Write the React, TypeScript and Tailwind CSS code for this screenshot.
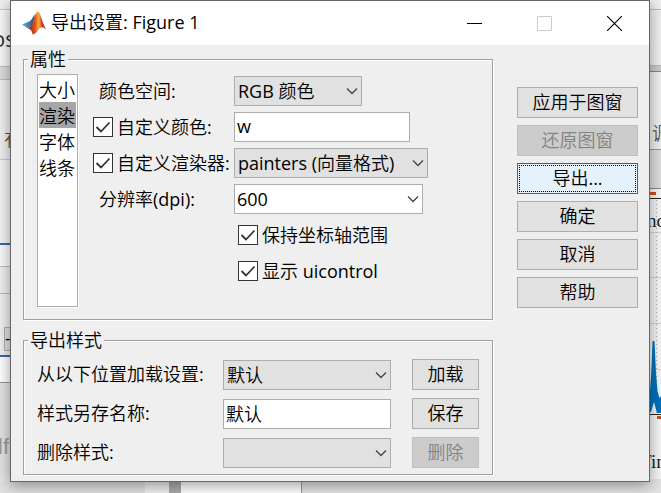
import { useState } from "react";
import type { ReactNode } from "react";

const selectBase =
  "h-[30px] w-full appearance-none border border-[#adadad] pr-6 text-black outline-none";

function Chevron() {
  return (
    <svg
      className="pointer-events-none absolute right-1 top-1/2 -translate-y-1/2"
      width="12"
      height="8"
      viewBox="0 0 12 8"
      fill="none"
      aria-hidden="true"
    >
      <path d="M1 1.5L6 6.5L11 1.5" stroke="#444" strokeWidth="1.3" />
    </svg>
  );
}

function Dropdown({ id, options, width, white = false }: { id: string; options: string[]; width: string; white?: boolean }) {
  return (
    <div className={`relative ${width}`}>
      <select id={id} className={`${selectBase} ${white ? "bg-white pl-0.5" : "bg-[#e1e1e1] pl-[3px]"}`}>
        {options.map((option) => (
          <option key={option}>{option}</option>
        ))}
      </select>
      <Chevron />
    </div>
  );
}

function Checkbox({ children }: { children: ReactNode }) {
  const [checked, setChecked] = useState(true);

  return (
    <label className="flex items-center gap-1 whitespace-nowrap">
      <span className="relative flex h-5 w-5 shrink-0">
        <input
          type="checkbox"
          checked={checked}
          onChange={(e) => setChecked(e.target.checked)}
          className="h-5 w-5 appearance-none border border-[#333] bg-white"
        />
        {checked && (
          <svg className="pointer-events-none absolute inset-0" width="20" height="20" viewBox="0 0 20 20" fill="none" aria-hidden="true">
            <path d="M3.5 10L8 14.5L16.5 5.5" stroke="#333" strokeWidth="1.8" />
          </svg>
        )}
      </span>
      {children}
    </label>
  );
}

function PushButton({ children, disabled = false, primary = false }: { children: ReactNode; disabled?: boolean; primary?: boolean }) {
  const look = disabled
    ? "border-[#bfbfbf] bg-[#cccccc] text-[#838383]"
    : primary
      ? "border-[#0078d7] bg-[#e5f1fb] outline-1 -outline-offset-3 outline-dotted outline-black"
      : "border-[#adadad] bg-[#e1e1e1]";

  return (
    <button type="button" disabled={disabled} className={`h-[31px] w-full border pb-0.5 leading-6 ${look}`}>
      {children}
    </button>
  );
}

function Group({ title, children }: { title: string; children: ReactNode }) {
  return (
    <fieldset className="min-w-0 border border-[#a0a0a0] px-[13px] shadow-[1px_1px_0_#fff,inset_1px_1px_0_#fff]">
      <legend className="-ml-[9px] bg-[#efefef] px-0.5 leading-5">{title}</legend>
      {children}
    </fieldset>
  );
}

function MatlabLogo() {
  return (
    <svg width="24" height="24" viewBox="0 0 24 24" aria-hidden="true">
      <defs>
        <linearGradient id="wing" x1="0" y1="0" x2="1" y2="0">
          <stop offset="0" stopColor="#5bb4e5" />
          <stop offset="1" stopColor="#234a7c" />
        </linearGradient>
        <linearGradient id="peak" x1="0" y1="0" x2="1" y2="0">
          <stop offset="0" stopColor="#7a2416" />
          <stop offset="0.4" stopColor="#e0541c" />
          <stop offset="0.6" stopColor="#f9b04a" />
          <stop offset="0.75" stopColor="#dc4a1c" />
          <stop offset="1" stopColor="#a01f16" />
        </linearGradient>
      </defs>
      <path d="M0 13.5L7 10.5C9 10 11 6 13 3L11 13L6 17.5Z" fill="url(#wing)" />
      <path d="M6 17.5C8 16.5 9.5 14 11 10C12.5 6 14 1 16 0.5C18.5 1 20 11 24 18.5C21 16 19 15.5 17 18C14.5 21 13 23.5 10.5 23.5C10 20.5 9 18 6 17.5Z" fill="url(#peak)" />
    </svg>
  );
}

function TitleBar() {
  return (
    <header className="flex h-11 items-center bg-white pl-[11px]">
      <MatlabLogo />
      <h1 className="ml-[5px] flex-1 whitespace-nowrap pb-0.5">导出设置: Figure 1</h1>
      <button type="button" aria-label="最小化" className="flex h-full w-[70px] items-center justify-center">
        <svg width="15" height="15" viewBox="0 0 15 15" aria-hidden="true">
          <path d="M0 7.5H15" stroke="#000" />
        </svg>
      </button>
      <button type="button" aria-label="最大化" disabled className="flex h-full w-[70px] items-center justify-center">
        <svg width="15" height="15" viewBox="0 0 15 15" fill="none" aria-hidden="true">
          <path d="M0.5 0.5H14.5V14.5H0.5Z" stroke="#ccc" />
        </svg>
      </button>
      <button type="button" aria-label="关闭" className="flex h-full w-[70px] items-center justify-center">
        <svg width="15" height="15" viewBox="0 0 15 15" aria-hidden="true">
          <path d="M0 0L15 15M15 0L0 15" stroke="#000" strokeWidth="1.1" />
        </svg>
      </button>
    </header>
  );
}

function PropertiesGroup() {
  return (
    <Group title="属性">
      <div className="flex gap-[15px] pb-3 pt-[5px]">
        <select
          size={4}
          defaultValue="渲染"
          aria-label="属性"
          className="h-[233px] w-[41px] shrink-0 overflow-hidden border border-[#adadad] bg-white p-px shadow-[1px_1px_0_#fff] outline-none"
        >
          {["大小", "渲染", "字体", "线条"].map((name) => (
            <option
              key={name}
              className="h-[26px] p-0 leading-6 text-black checked:bg-linear-to-r checked:from-[#a6a6a6] checked:to-[#a6a6a6]"
            >
              {name}
            </option>
          ))}
        </select>
        <div className="grid flex-1 auto-rows-[30px] grid-cols-[141px_1fr] content-start items-center gap-y-1.5 pt-0.5">
          <label htmlFor="colorspace" className="pl-1.5">颜色空间:</label>
          <Dropdown id="colorspace" width="w-32" options={["RGB 颜色", "CMYK 颜色", "灰度"]} />
          <Checkbox>自定义颜色:</Checkbox>
          <input
            aria-label="自定义颜色"
            defaultValue="w"
            className="h-[30px] w-44 border border-[#adadad] bg-white px-0.5 pb-0.5 outline-none"
          />
          <Checkbox>自定义渲染器:</Checkbox>
          <Dropdown id="renderer" width="w-[194px]" options={["painters (向量格式)", "OpenGL (位图格式)"]} />
          <label htmlFor="dpi" className="pl-1.5">分辨率(dpi):</label>
          <Dropdown id="dpi" width="w-[189px]" options={["600", "300", "150"]} white />
          <div className="col-start-2 pl-1">
            <Checkbox>保持坐标轴范围</Checkbox>
          </div>
          <div className="col-start-2 pl-1">
            <Checkbox>显示 uicontrol</Checkbox>
          </div>
        </div>
      </div>
    </Group>
  );
}

function StylesGroup() {
  return (
    <Group title="导出样式">
      <div className="grid grid-cols-[186px_1fr_67px] items-center gap-y-2 pb-1.5 pt-[9px]">
        <label htmlFor="load" className="pb-0.5">从以下位置加载设置:</label>
        <Dropdown id="load" width="w-[168px]" options={["默认"]} />
        <PushButton>加载</PushButton>
        <label htmlFor="save" className="pb-0.5">样式另存名称:</label>
        <input
          id="save"
          defaultValue="默认"
          className="h-[30px] w-[168px] border border-[#adadad] bg-white px-0.5 pb-0.5 outline-none"
        />
        <PushButton>保存</PushButton>
        <label htmlFor="remove" className="pb-0.5">删除样式:</label>
        <Dropdown id="remove" width="w-[168px]" options={[""]} />
        <PushButton disabled>删除</PushButton>
      </div>
    </Group>
  );
}

/* Edges of the windows that lie behind the dialog */
function LeftEdge() {
  return (
    <aside className="flex w-2.5 shrink-0 flex-col overflow-hidden whitespace-nowrap bg-[#f0f0f0]" aria-hidden="true">
      <div className="h-2.5 border-b border-[#ccc]" />
      <div className="-ml-2 flex h-14 items-center bg-[#f8f8f8] text-[22px] text-[#333]">os</div>
      <div className="h-3.5 border-y border-[#bbb] bg-[#dedede]" />
      <div className="flex h-20 items-end border-b border-[#ccc] pb-2 pl-1 text-[#555]">有</div>
      <div className="h-[83px] bg-[#f3f3f3]" />
      <div className="h-6 border-b border-t-2 border-b-[#bbb] border-t-[#3b67a5] bg-[#fafafa]" />
      <div className="h-[27px] border-b border-[#bbb]" />
      <div className="flex h-[61px] items-end pb-1 pl-1">
        <div className="h-6 w-3 shrink-0 border border-[#adadad] bg-[#e1e1e1] leading-5">-</div>
      </div>
      <div className="h-7 border-b border-t-2 border-b-[#999] border-t-[#3b67a5] bg-white" />
      <div className="-ml-0.5 flex flex-1 items-center bg-[#e4e4e4] pt-7 font-['Liberation_Sans',sans-serif] text-[22px] text-[#a09a9a]">lf</div>
    </aside>
  );
}

function RightEdge() {
  return (
    <aside className="flex w-[11px] shrink-0 flex-col overflow-hidden whitespace-nowrap bg-[#f0f0f0]" aria-hidden="true">
      <div className="h-2.5 border-b border-[#bbb]" />
      <div className="h-14 border-b border-[#bbb]" />
      <div className="h-1.5 border-b border-[#888] bg-[#ccc]" />
      <div className="flex h-[78px] items-end border-b border-[#999] pb-1 pl-0.5 text-[#555]">调</div>
      <div className="h-[38px] bg-[#dedede]" />
      <svg width="11" height="291" viewBox="0 0 11 291" className="shrink-0 bg-[#f6f6f6]">
        <path d="M0 0.5H11" stroke="#888" />
        <path d="M0 5.5H6M7 229.5H11" stroke="#d3501a" strokeWidth="3" />
        <path d="M0 10.5H11M0 226.5H11" stroke="#222" />
        <path d="M0 44.5H11M0 89.5H11M0 135.5H11M0 181.5H11" stroke="#d4d4d4" />
        <path d="M6.5 12V226" stroke="#aaa" strokeDasharray="1 3" />
        <path d="M0 224V203L1.5 180L2.5 153H4.5L6 185L7.5 203L9.500 210L11 208V225H7L4 214L1 224Z" fill="#0072bd" />
        <text x="-3" y="39" fontSize="19" fontFamily="Liberation Serif, serif" fill="#222">nd</text>
        <text x="-10" y="280" fontSize="19" fontFamily="Liberation Serif, serif" fill="#222">Tin</text>
      </svg>
      <div className="flex-1 bg-[#e3e3e3]" />
    </aside>
  );
}

function BottomEdge() {
  return (
    <div className="flex min-h-[11px] flex-1" aria-hidden="true">
      <div className="w-[145px] bg-[#e0e0e0]" />
      <div className="w-6 bg-[#eeeeee]" />
      <div className="w-3 bg-[#aaaaaa]" />
      <div className="w-[121px] border-r border-[#999] bg-white" />
      <div className="flex-1 bg-[#e3e3e3]" />
    </div>
  );
}

export default function App() {
  return (
    <div className="flex min-h-screen flex-col overflow-hidden font-['Open_Sans','Noto_Sans_CJK_SC_DemiLight','Noto_Sans_CJK_SC',sans-serif] text-[18px] leading-6 text-black">
      <div className="flex">
        <LeftEdge />
        <main className="relative z-10 min-w-0 flex-1 border border-[#666] bg-[#efefef] shadow-[0_3px_14px_rgba(0,0,0,0.4)]">
          <TitleBar />
          <form className="flex gap-6 pb-1.5 pl-3 pr-[11px] pt-1">
            <div className="flex min-w-0 flex-1 flex-col gap-2.5">
              <PropertiesGroup />
              <StylesGroup />
            </div>
            <div className="mt-[38px] flex w-[121px] shrink-0 flex-col gap-[7px]">
              <PushButton>应用于图窗</PushButton>
              <PushButton disabled>还原图窗</PushButton>
              <PushButton primary>导出...</PushButton>
              <PushButton>确定</PushButton>
              <PushButton>取消</PushButton>
              <PushButton>帮助</PushButton>
            </div>
          </form>
        </main>
        <RightEdge />
      </div>
      <BottomEdge />
    </div>
  );
}
